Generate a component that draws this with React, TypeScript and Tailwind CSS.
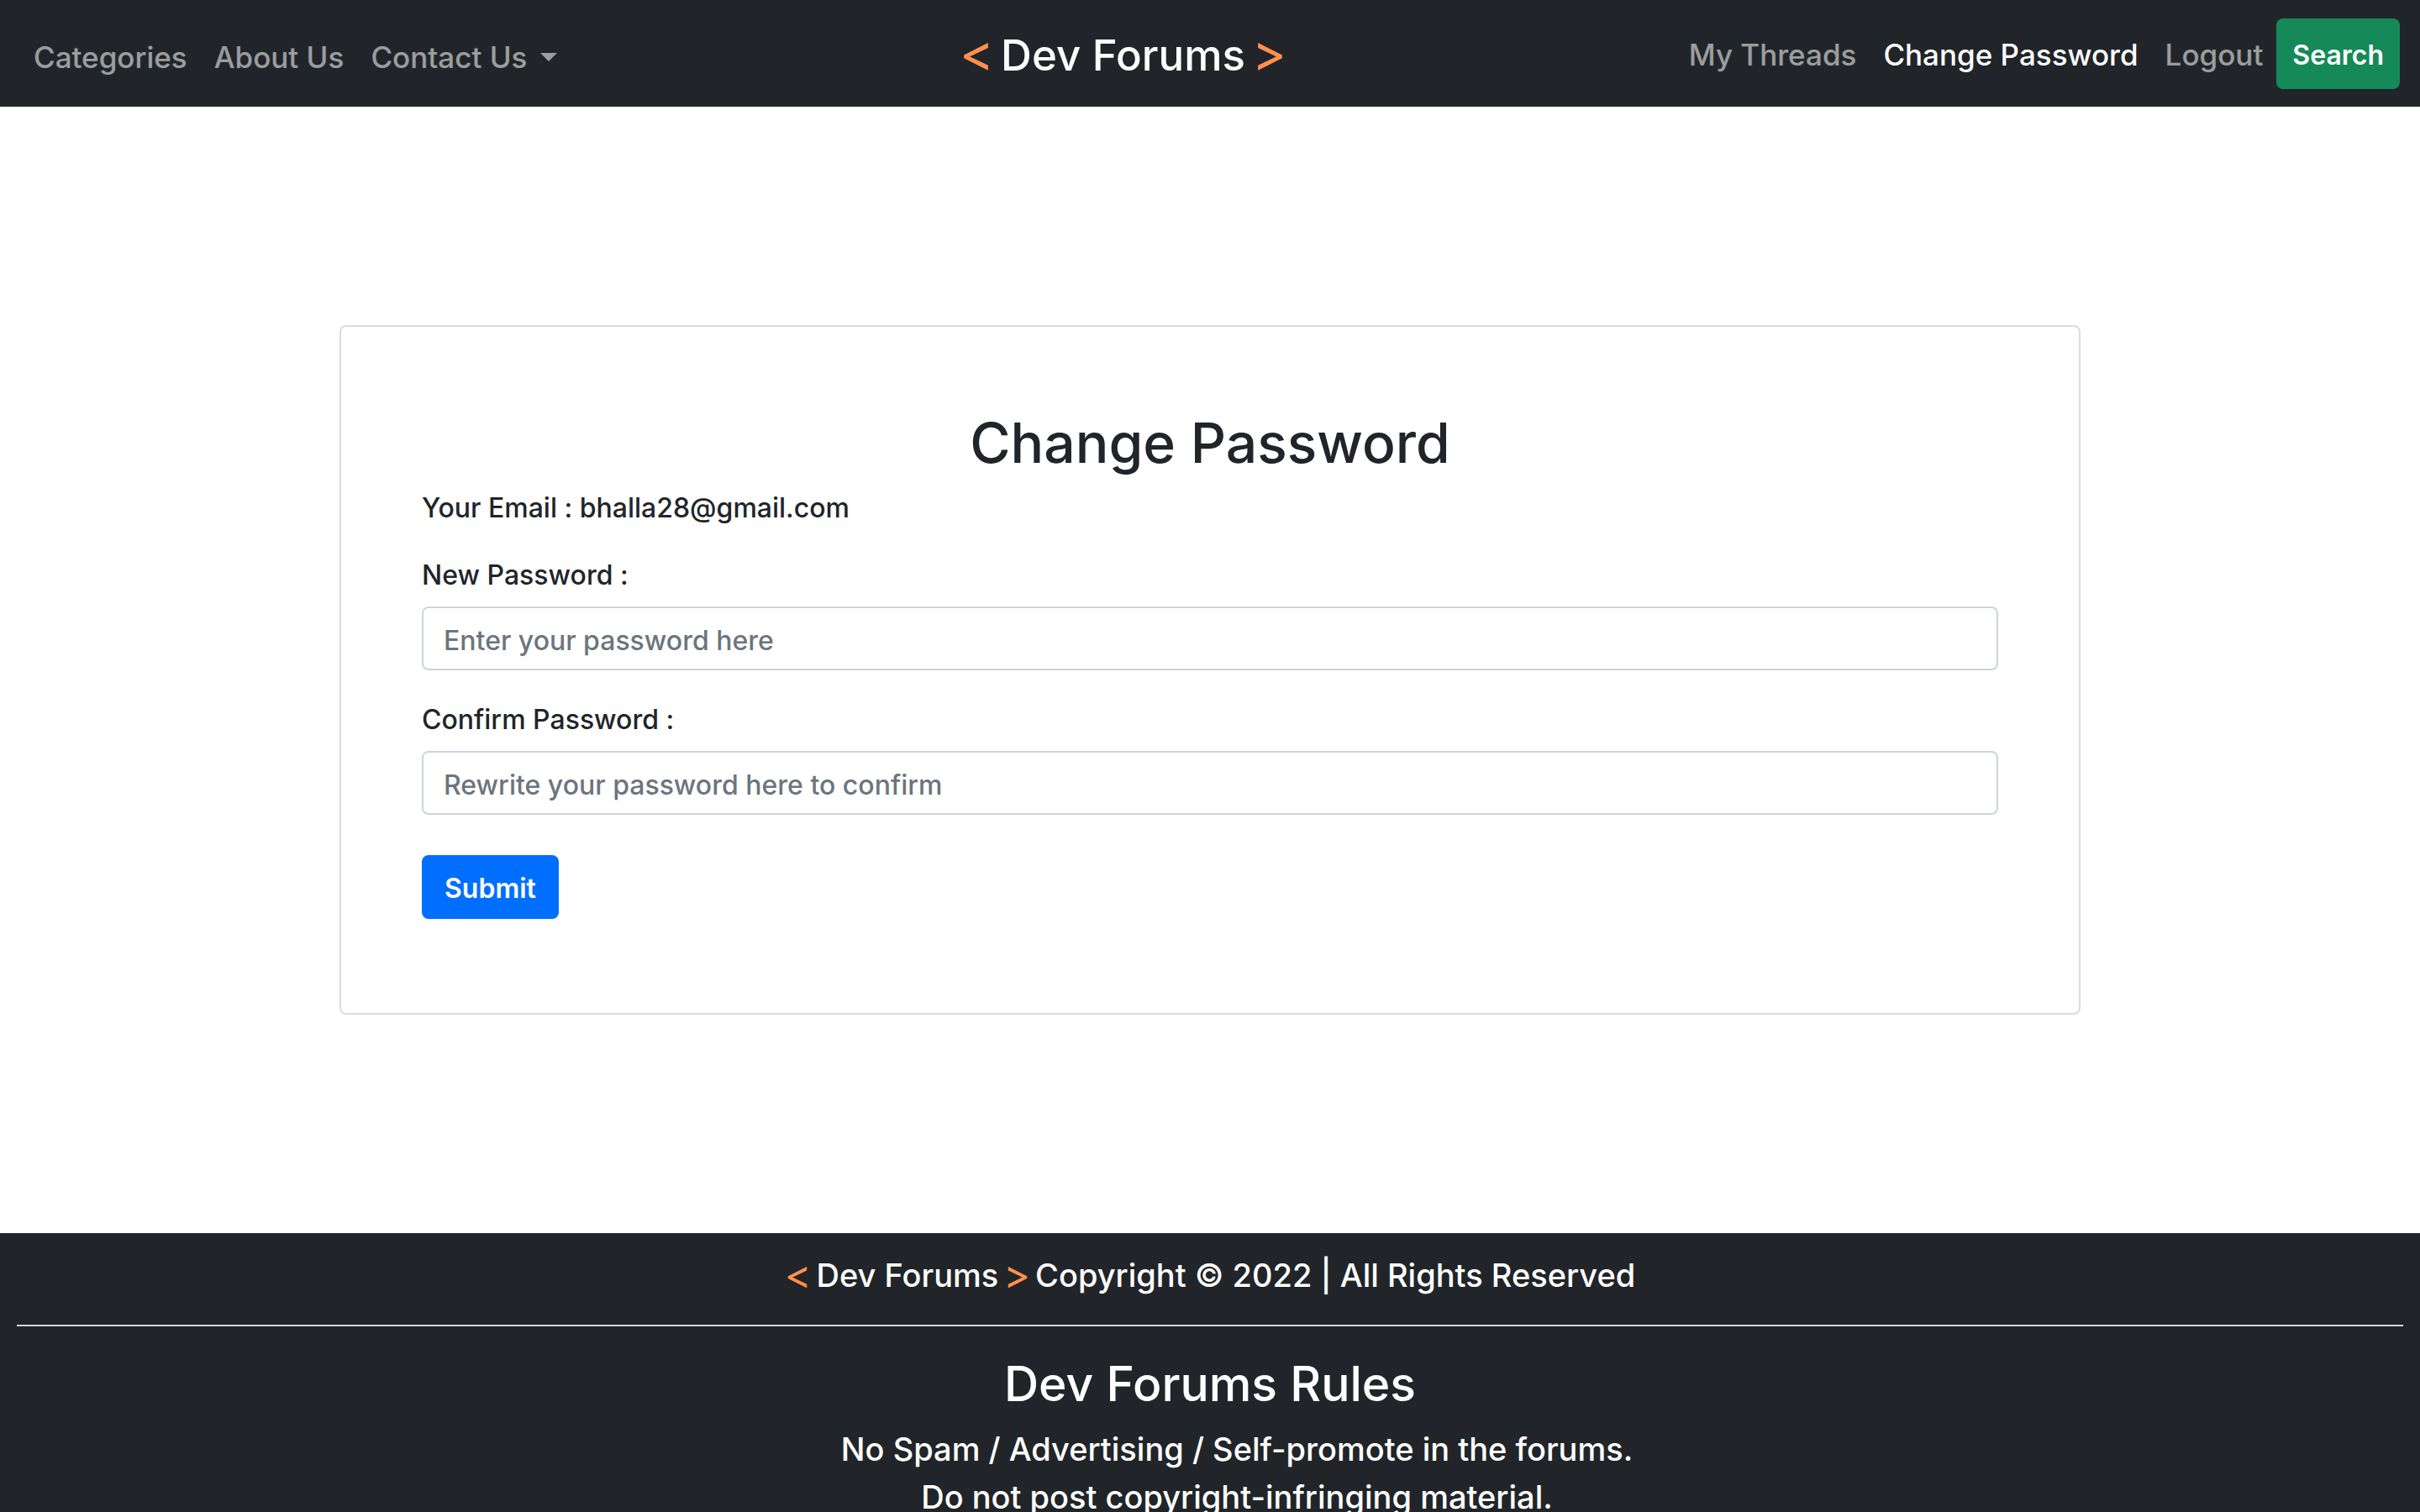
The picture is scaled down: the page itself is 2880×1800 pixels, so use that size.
const leftLinks = ["Categories", "About Us"];
const rules = [
  "No Spam / Advertising / Self-promote in the forums.",
  "Do not post copyright-infringing material.",
];

function Navbar() {
  return (
    <nav className="flex h-[127px] items-center justify-between bg-[#212529] px-6 text-[35px] leading-[52px] text-white/55">
      <ul className="flex pt-2">
        {leftLinks.map((label) => (
          <li key={label}>
            <a href="#" className="px-4">
              {label}
            </a>
          </li>
        ))}
        <li>
          <button type="button" aria-haspopup="menu" className="flex items-center gap-4 px-4">
            Contact Us
            <svg viewBox="0 0 20 10" className="h-[10px] w-5 fill-current" aria-hidden="true">
              <path d="M0 0h20L10 10z" />
            </svg>
          </button>
        </li>
      </ul>
      <a href="#" className="flex items-center gap-2 pt-1.5 text-[51px] leading-[76px] text-white">
        <span className="pb-2 text-[62px] font-normal text-[#ff914d]">&lt;</span>
        <span className="pb-0.5">Dev Forums</span>
        <span className="pb-2 text-[62px] font-normal text-[#ff914d]">&gt;</span>
      </a>
      <div className="flex items-center">
        <ul className="flex pt-0.5">
          <li>
            <a href="#" className="px-4">
              My Threads
            </a>
          </li>
          <li>
            <a href="#" aria-current="page" className="px-4 text-white">
              Change Password
            </a>
          </li>
          <li>
            <a href="#" className="px-4">
              Logout
            </a>
          </li>
        </ul>
        <button
          type="button"
          className="h-[84px] rounded-lg bg-[#158958] px-[19px] pt-1 text-[32px] font-semibold text-white"
        >
          Search
        </button>
      </div>
    </nav>
  );
}

function Field({ id, label, placeholder }: { id: string; label: string; placeholder: string }) {
  return (
    <div className="flex flex-col gap-[13px]">
      <label htmlFor={id}>{label}</label>
      <input
        id={id}
        type="password"
        placeholder={placeholder}
        className="h-[76px] w-full rounded-lg border-2 border-[#ced4da] bg-white px-6 pt-1 placeholder:text-[#6c757d]"
      />
    </div>
  );
}

function PasswordCard() {
  return (
    <main className="mx-auto my-[260px] w-[72%] max-w-[2072px] rounded-lg border-2 border-[#dcdcdc] px-24 pt-24 pb-28 text-[32px] leading-[48px] text-[#212529]">
      <h1 className="mb-3 text-center text-[66px] leading-[84px]">Change Password</h1>
      <p className="mb-8">Your Email : bhalla28@gmail.com</p>
      <form className="flex flex-col items-start" onSubmit={(e) => e.preventDefault()}>
        <div className="mb-12 flex w-full flex-col gap-[35px]">
          <Field id="new-password" label="New Password :" placeholder="Enter your password here" />
          <Field
            id="confirm-password"
            label="Confirm Password :"
            placeholder="Rewrite your password here to confirm"
          />
        </div>
        <button
          type="submit"
          className="h-[76px] rounded-lg bg-[#006fff] px-[27px] pt-1 font-semibold text-white"
        >
          Submit
        </button>
      </form>
    </main>
  );
}

function Footer() {
  return (
    <footer className="bg-[#212529] px-5 pt-[22px] text-center text-[38px] leading-[57px] text-white">
      <p className="flex h-[57px] items-center justify-center gap-1.5">
        <span className="pb-1 text-[48px] font-normal text-[#ff914d]">&lt;</span>
        <span>Dev Forums</span>
        <span className="pb-1 text-[48px] font-normal text-[#ff914d]">&gt;</span>
        <span>Copyright © 2022 | All Rights Reserved</span>
      </p>
      <hr className="mt-[30px] mb-[35px] border-t-2 border-[#d3d6d9]" />
      <h2 className="mb-[15px] text-[57px] leading-[68px]">Dev Forums Rules</h2>
      <ul className="pl-16">
        {rules.map((rule) => (
          <li key={rule}>{rule}</li>
        ))}
      </ul>
    </footer>
  );
}

export default function App() {
  return (
    <div className="min-h-screen bg-white font-['Inter','Liberation_Sans',sans-serif] font-medium">
      <Navbar />
      <PasswordCard />
      <Footer />
    </div>
  );
}
